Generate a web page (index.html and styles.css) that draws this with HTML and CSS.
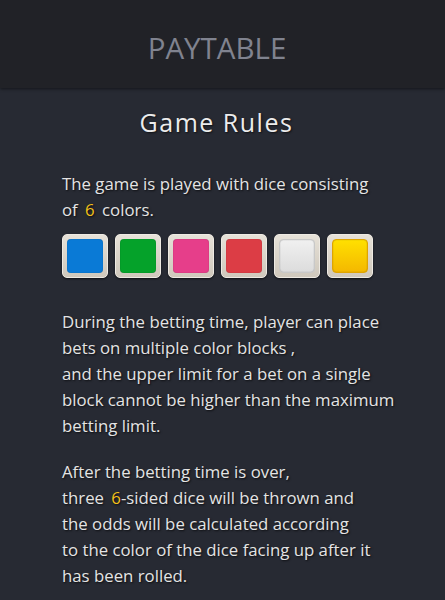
FILE: index.html
```html
<!DOCTYPE html>
<html>
<head>
<meta charset="utf-8">
<link rel="stylesheet" href="styles.css">
</head>
<body>
<header class="header"><h1 class="title">PAYTABLE</h1></header>
<main class="content">
  <h2 class="heading">Game Rules</h2>
  <p class="para">The game is played with dice consisting<br>of <span class="hl hl-pad">6</span> colors.</p>
  <div class="dice">
    <div class="die"><div class="face blue"></div></div>
    <div class="die"><div class="face green"></div></div>
    <div class="die"><div class="face pink"></div></div>
    <div class="die"><div class="face red"></div></div>
    <div class="die"><div class="face white"></div></div>
    <div class="die"><div class="face yellow"></div></div>
  </div>
  <p class="para">During the betting time, player can place<br>bets on multiple color blocks ,<br>and the upper limit for a bet on a single<br>block cannot be higher than the maximum<br>betting limit.</p>
  <p class="para">After the betting time is over,<br>three <span class="hl">6</span>-sided dice will be thrown and<br>the odds will be calculated according<br>to the color of the dice facing up after it<br>has been rolled.</p>
</main>
</body>
</html>
```
FILE: styles.css
```css
html, body {
  margin: 0;
  padding: 0;
  background: #272a33;
  font-family: "Open Sans", "Noto Sans", sans-serif;
  height: 100%;
  overflow: hidden;
}
.header {
  height: 88px;
  background: #212227;
  display: flex;
  align-items: center;
  justify-content: center;
  padding-right: 11px;
  box-shadow: 0 1px 3px rgba(0,0,0,0.5);
  position: relative;
}
.title {
  margin: 0;
  padding-top: 6px;
  font-size: 29.5px;
  font-weight: 400;
  color: #80838f;
  letter-spacing: 0;
}
.content {
  padding: 0 48px 0 62px;
}
.heading {
  margin: 16px 0 0 0;
  text-align: center;
  font-size: 25px;
  font-weight: 400;
  letter-spacing: 1.5px;
  color: #ececec;
  line-height: 36px;
  transform: translateX(-13px);
  text-shadow: 1px 1px 2px rgba(0,0,0,0.6);
}
.para {
  margin: 0;
  font-size: 16.8px;
  line-height: 26px;
  color: #e4e4e4;
  text-shadow: 1px 1px 2px rgba(0,0,0,0.7);
}
.heading + .para { margin-top: 31px; }
.para + .para { margin-top: 20px; }
.hl {
  color: #f3c019;
  padding-left: 3px;
}
.hl-pad {
  padding-right: 3px;
}
.dice {
  display: flex;
  gap: 7px;
  margin: 11px 0 31px 0;
}
.die {
  width: 46px;
  height: 44px;
  box-sizing: border-box;
  border-radius: 5px;
  background: linear-gradient(#e6e1d8, #cfc8bc);
  border: 1px solid #eeeae3;
  box-shadow: 0 1px 2px rgba(0,0,0,0.6);
  padding: 4px;
  display: flex;
}
.face {
  flex: 1;
  border-radius: 4px;
  box-shadow: inset 0 0 1px rgba(0,0,0,0.4);
}
.blue { background: #0a7ad6; }
.green { background: #05a22a; }
.pink { background: #e63e8a; }
.red { background: #dc3d45; }
.white { background: linear-gradient(#f0f0f0, #dcdcdc); border: 1px solid #c8c8c8; }
.yellow { background: linear-gradient(#ffe000, #f4b800); border: 1px solid #e0a400; }
```
